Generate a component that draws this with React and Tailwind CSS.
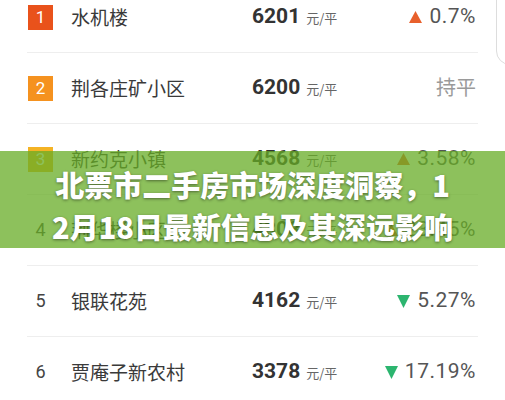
const rows = [
  { rank: 1, name: '水机楼', price: '6201', change: '0.7%', dir: 'up' },
  { rank: 2, name: '荆各庄矿小区', price: '6200', change: '持平', dir: 'flat' },
  { rank: 3, name: '新约克小镇', price: '4568', change: '3.58%', dir: 'up' },
  { rank: 4, name: '荆华楼小区', price: '4308', change: '23.45%', dir: 'up' },
  { rank: 5, name: '银联花苑', price: '4162', change: '5.27%', dir: 'down' },
  { rank: 6, name: '贾庵子新农村', price: '3378', change: '17.19%', dir: 'down' },
]

const badgeColors = {
  1: 'bg-[#e9521b] text-white',
  2: 'bg-[#f5921f] text-white',
  3: 'bg-[#f4b324] text-white',
}

function Rank({ rank }) {
  if (badgeColors[rank]) {
    return (
      <span className={`flex h-[25px] w-[25px] items-center justify-center text-[17px] leading-none ${badgeColors[rank]}`}>
        {rank}
      </span>
    )
  }
  return <span className="flex w-[25px] justify-center text-[18px] leading-none text-[#444]">{rank}</span>
}

function Change({ dir, change }) {
  if (dir === 'flat') {
    return <span className="text-[20px] text-[#9a9a9a]">{change}</span>
  }
  return (
    <span className="flex items-center gap-[7px] text-[21px] tracking-[0.5px] text-[#555]">
      {dir === 'up' ? (
        <svg width="13" height="12" viewBox="0 0 13 12">
          <path d="M6.5 0 L13 12 L0 12 Z" fill="#e8602c" />
        </svg>
      ) : (
        <svg width="13" height="13" viewBox="0 0 13 13">
          <path d="M0 0 L13 0 L6.5 13 Z" fill="#2cb56f" />
        </svg>
      )}
      {change}
    </span>
  )
}

export default function App() {
  return (
    <div className="relative h-[400px] w-[505px] overflow-hidden bg-white font-['Roboto','Noto_Sans_CJK_SC',sans-serif]">
      <div className="-mt-[18px] px-[27px]">
        {rows.map((r) => (
          <div key={r.rank} className="flex h-[71px] items-center border-b border-[#eeeeee]">
            <div className="w-[44px] pl-px">
              <Rank rank={r.rank} />
            </div>
            <div className="w-[181px] font-['Noto_Sans_CJK_SC',sans-serif] text-[19px] text-[#3a3a3a]">{r.name}</div>
            <div className="flex flex-1 items-baseline gap-[6px]">
              <span className="text-[21px] font-bold text-[#333]">{r.price}</span>
              <span className="font-['Noto_Sans_CJK_SC',sans-serif] text-[13px] text-[#666]">元/平</span>
            </div>
            <div className="pr-[2px]">
              <Change dir={r.dir} change={r.change} />
            </div>
          </div>
        ))}
      </div>

      {/* 右上角卡片边缘 */}
      <div className="absolute -top-4 left-[496px] h-[81px] w-[40px] rounded-bl-[14px] border border-[#dddddd] bg-white" />

      {/* 标题横幅 */}
      <div className="absolute left-0 top-[151px] flex h-[97px] w-full justify-center bg-[#67ac26]/75 pt-[12px]">
        <h1 className="w-[412px] break-all text-center font-['Noto_Sans_CJK_SC',sans-serif] text-[29px] font-black leading-[42px] text-white [text-shadow:0_1px_3px_rgba(0,0,0,0.45)]">
          北票市二手房市场深度洞察，12月18日最新信息及其深远影响
        </h1>
      </div>
    </div>
  )
}
